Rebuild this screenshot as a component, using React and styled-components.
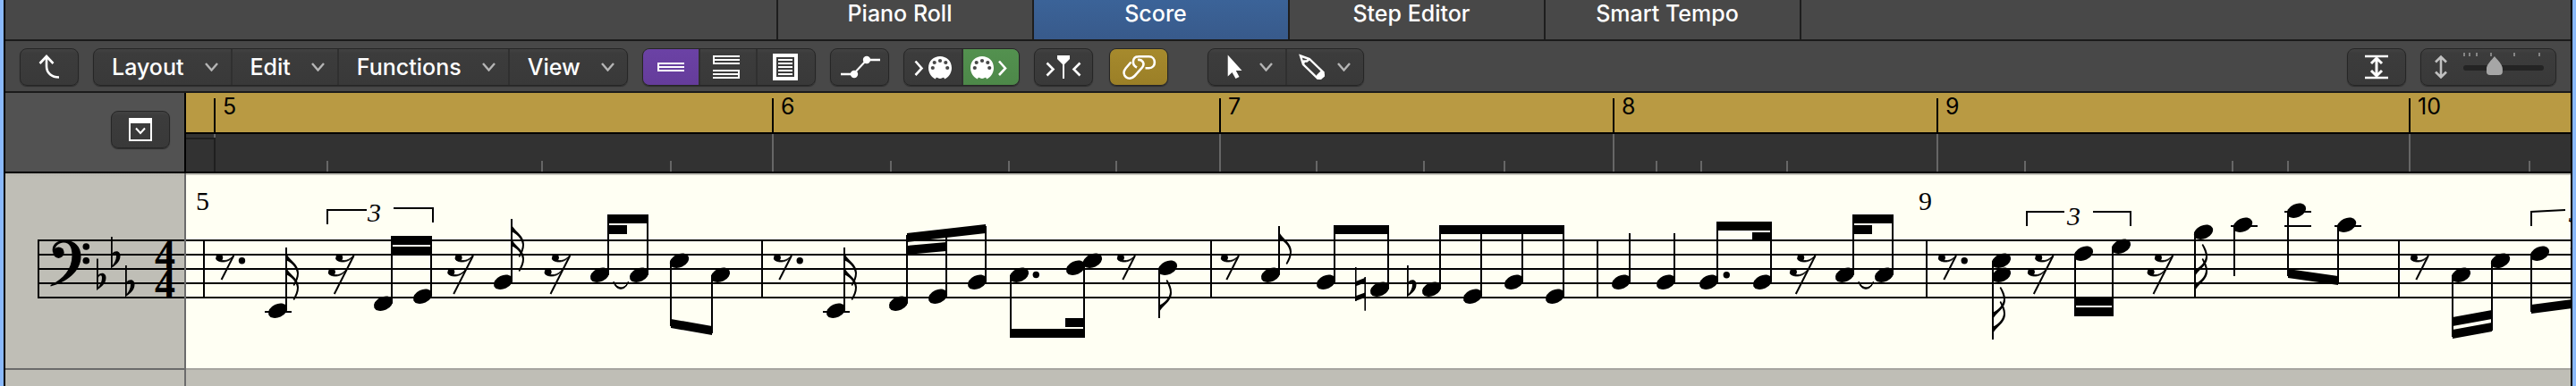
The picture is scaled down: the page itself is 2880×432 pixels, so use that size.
import React from "react";
import styled, { createGlobalStyle, css } from "styled-components";

const GlobalStyle = createGlobalStyle`
  *, *::before, *::after { box-sizing: border-box; }
  body {
    margin: 0;
    background: #bfbeb6;
    font-family: Inter, "Liberation Sans", sans-serif;
    -webkit-font-smoothing: antialiased;
  }
  button { font: inherit; color: inherit; }
`;

/* ---------- window and tab bar ---------- */

const Window = styled.main`
  display: flex;
  flex-direction: column;
  min-height: 100vh;
  border: solid #8ab9fb;
  border-width: 0 4px;
`;

const Frame = styled.div`
  flex: 1;
  display: flex;
  flex-direction: column;
  min-width: 0;
  border: solid #000;
  border-width: 0 2px;
`;

const TabBar = styled.div`
  display: flex;
  justify-content: center;
  height: 46px;
  padding-left: 2px;
  background: #484848;
  border-bottom: 2px solid #1b1b1b;
`;

const Tab = styled.button`
  width: 286px;
  padding: 0 12px 14px 0;
  border: 0;
  border-left: 2px solid #1e1e1e;
  background: ${(p) => (p.$active ? "linear-gradient(#3b6398, #385a8b)" : "transparent")};
  color: #fff;
  font-size: 25px;
  line-height: 30px;
  font-weight: 500;
  text-align: center;
  &:last-child {
    width: 288px;
    border-right: 2px solid #1e1e1e;
  }
`;

/* ---------- toolbar ---------- */

const Toolbar = styled.div`
  display: flex;
  align-items: center;
  gap: 16px;
  height: 58px;
  padding: 2px 16px 0;
  background: #484848;
  border-bottom: 2px solid #1b1b1b;
`;

const Group = styled.div`
  display: flex;
  height: 42px;
  margin-left: ${(p) => p.$lead || 0}px;
  border: 1px solid #262626;
  border-radius: 8px;
  background: linear-gradient(#424242, #3c3c3c 12%, #393939);
  box-shadow: 0 1px 1px #2c2c2c;
  overflow: hidden;
`;

const tones = {
  purple: "linear-gradient(#6b42a5, #653c9b)",
  green: "linear-gradient(#53914f, #4d8849)",
  gold: "linear-gradient(#a68a2d, #9b7f27)",
};

const Segment = styled.button`
  display: flex;
  align-items: center;
  justify-content: center;
  flex: none;
  height: 40px;
  padding: 0;
  border: 0;
  color: #fff;
  background: ${(p) => tones[p.$tone] || "transparent"};
  & + & { border-left: 2px solid #303030; }
`;

const MenuSegment = styled(Segment)`
  gap: 23px;
  padding: 0 14px 0 20px;
  font-size: 25px;
  line-height: 40px;
  font-weight: 500;
`;

const ToolSegment = styled(Segment)`
  gap: 11px;
  padding: 0 14px 0 12px;
`;

const Spacer = styled.div`
  flex: 1;
`;

const Icon = styled.svg`
  display: block;
  flex: none;
  fill: none;
  stroke: currentColor;
  stroke-width: 2.6;
`;

const CaretIcon = styled(Icon)`
  color: #b5b5b5;
`;

const Caret = () => (
  <CaretIcon width="15" height="10" viewBox="0 0 15 10" aria-hidden="true">
    <path d="M1 1 7.500 8.500 14 1" strokeWidth="2.4" />
  </CaretIcon>
);

const glyphs = {
  back: <path d="M30 9V20C30 28 36 32.5 44 32.5M22.5 17 30 9 37.5 17" />,
  linear: (
    <path strokeWidth="2" d="M18 17H48M18 21H48M18 25H48M19 16V26" />
  ),
  wrapped: (
    <path strokeWidth="2" d="M16 9H46M16 13H46M16 17H46M17 8V18M16 25H46M16 29H46M16 33H46M45 24V34" />
  ),
  page: (
    <g>
      <path d="M18 6H46V36H18ZM22 10V32H42V10Z" fill="currentColor" stroke="none" fillRule="evenodd" />
      <path strokeWidth="2" d="M24 13H40M24 17H40M24 21H40M24 25H40M24 29H40" />
    </g>
  ),
  automation: (
    <g>
      <path strokeWidth="2" d="M26 29 41 13" />
      <path d="M12 29H26M41 13H56" />
      <circle cx="27" cy="29" r="4.2" fill="currentColor" stroke="none" />
      <circle cx="41" cy="13" r="4.2" fill="currentColor" stroke="none" />
    </g>
  ),
  catchFilter: (
    <g>
      <path d="M14.500 16.500 21.500 23.500 14.500 30.500M51.500 16.500 44.500 23.500 51.500 30.500" />
      <path d="M26 8H40V12L34 18V34H32V18L26 12Z" fill="currentColor" stroke="none" />
    </g>
  ),
  link: (
    <g>
      <path d="M31 21.500C25 18.500 25.500 9.200 33.500 9.200H44.500C53 9.200 53 22.300 44.500 22.300H40.500" />
      <path d="M24.500 15.500 18.500 22.500C12.500 30 22 38 28.500 31L37 21.500C40.500 17 37 12 32 13" />
    </g>
  ),
  fit: (
    <g>
      <path d="M20 9H46M20 33H46" />
      <path d="M33 12V30M27 17 33 11 39 17M27 25 33 31 39 25" strokeWidth="3" />
    </g>
  ),
};

const Glyph = ({ name, width = 64 }) => (
  <Icon width={width} height="40" viewBox={`${(66 - width) / 2} 1 ${width} 40`} aria-hidden="true">
    {glyphs[name]}
  </Icon>
);

const MidiPlug = ({ cx }) => (
  <g>
    <path
      d={`M${cx} 9C${cx + 7} 9 ${cx + 13} 14 ${cx + 13} 22C${cx + 13} 28 ${cx + 9} 33 ${cx + 5} 34.500
        C${cx + 4} 31 ${cx + 3} 34 ${cx} 34C${cx - 3} 34 ${cx - 4} 31 ${cx - 5} 34.500
        C${cx - 9} 33 ${cx - 13} 28 ${cx - 13} 22C${cx - 13} 14 ${cx - 7} 9 ${cx} 9Z`}
      fill="#fff"
      stroke="none"
    />
    {[[0, -8], [-6.3, -6], [6.3, -6], [-8.2, 0], [8.2, 0]].map(([dx, dy]) => (
      <circle key={`${dx}${dy}`} cx={cx + dx} cy={22 + dy} r="2.1" fill="#474747" stroke="none" />
    ))}
  </g>
);

const ZoomPanel = styled(Group)`
  width: 152px;
  padding-left: 15px;
  gap: 18px;
  color: #c0c0c0;
`;

const SliderStack = styled.label`
  display: flex;
  flex-direction: column;
  padding-top: 4px;
`;

const Slider = styled.input`
  appearance: none;
  width: 90px;
  height: 26px;
  margin: 0;
  background: transparent;
  &::-webkit-slider-runnable-track {
    height: 6px;
    border-radius: 3px;
    background: #242424;
  }
  &::-webkit-slider-thumb {
    appearance: none;
    width: 18px;
    height: 21px;
    margin-top: -10px;
    background: #a6a6a6;
    clip-path: path("M9 0 C12 4 18 9 18 14 V17 Q18 21 14 21 H4 Q0 21 0 17 V14 C0 9 6 4 9 0 Z");
  }
`;

/* ---------- ruler ---------- */

const SIDE = 202;

const RulerRow = styled.div`
  display: flex;
  height: 90px;
  border-bottom: 2px solid #000;
`;

const RulerSide = styled.div`
  flex: none;
  display: flex;
  justify-content: flex-end;
  align-items: flex-start;
  width: ${SIDE}px;
  padding: 20px 16px 0 0;
  background: #525252;
  border-right: 2px solid #000;
`;

const RulerBody = styled.div`
  flex: 1;
  min-width: 0;
  background: #323232;
`;

const BarStrip = styled.div`
  display: flex;
  align-items: flex-end;
  height: 46px;
  padding-left: 31px;
  background: #b99a43;
  border-bottom: 2px solid #000;
  overflow: hidden;
`;

const Bar = styled.div`
  flex: 0 0 ${(p) => p.$width}px;
  height: 38px;
  padding-left: 8px;
  border-left: 2px solid #000;
  color: #000;
  font-size: 25px;
  line-height: 18px;
`;

const Beats = styled.svg`
  display: block;
  width: 100%;
  height: 42px;
`;

/* bar number and its length in the timeline */
const bars = [[5, 624], [6, 500], [7, 440], [8, 362], [9, 528], [10, 400]];
const barTicks = [863, 1363, 1803, 2165, 2693];
const beatTicks = [365, 605, 749, 995, 1127, 1247, 1471, 1591, 1681, 1851, 1901, 1997, 2263, 2495, 2557, 2827];

/* ---------- score ---------- */

const ScoreRow = styled.div`
  display: flex;
  height: 220px;
`;

const paneSide = css`
  flex: none;
  width: ${SIDE}px;
  border-right: 2px solid #6b6b6b;
`;

const StaffHead = styled.div`
  ${paneSide}
  background: linear-gradient(#b5b4ac, #bfbeb6 4px);
  border-bottom: 2px solid #6b6b6b;
`;

const ScorePane = styled.div`
  flex: 1;
  min-width: 0;
  background: #fffff3;
  border-top: 2px solid #c6c5bd;
  border-bottom: 2px solid #a6a59f;
`;

const Below = styled.div`
  flex: 1;
  display: flex;
  min-height: 18px;
  background: #bfbeb6;
`;

const BelowSide = styled.div`
  ${paneSide}
`;

const Music = styled.svg`
  display: block;
  width: 100%;
  height: 216px;
  fill: #000;
  font-family: "Liberation Serif", serif;
  font-size: 30px;
`;

const headY = (s) => 347.7 - 8 * s;

const Head = ({ x, s }) => (
  <ellipse cx={x} cy={headY(s)} rx="11.2" ry="7.500" transform={`rotate(-25 ${x} ${headY(s)})`} />
);

const Line = ({ x1, y1, x2, y2 }) => <path d={`M${x1} ${y1}L${x2} ${y2}`} stroke="#000" strokeWidth="2" />;

const FLAG = "M0 6C2 13 14 18 14 28.500C14 34 12 38 9 43L7.600 42C10 37 12 33 12 29C11.500 22 5 16 0 14.500Z";

/* x: stem, s: staff steps above the lower ledger line, end: far end of the stem */
const Note = ({ x, s, end, down, flags = 0, ledgers = [], extra = [] }) => (
  <g>
    {[s, ...extra].map((v) => <Head key={v} x={down ? x + 9.5 : x - 9.5} s={v} />)}
    <Line x1={x} y1={headY(s)} x2={x} y2={end} />
    {ledgers.map((y) => (
      <Line key={y} x1={down ? x - 4 : x - 24} x2={down ? x + 26 : x + 6} y1={y} y2={y} />
    ))}
    {Array.from({ length: flags }, (_, i) => (
      <path key={i} d={FLAG} transform={`translate(${x} ${down ? end - 16 * i : end + 16 * i}) scale(1 ${down ? -1 : 1})`} />
    ))}
  </g>
);

/* a beam whose upper edge runs from (x1,y1) to (x2,y2) */
const Beam = ({ x1, y1, x2, y2 = y1, t = 10 }) => (
  <path d={`M${x1} ${y1}L${x2} ${y2}V${y2 + t}L${x1} ${y1 + t}Z`} />
);

const Swoosh = ({ x, y, tip = 16 }) => (
  <g>
    <circle cx={x} cy={y} r="3.9" />
    <path d={`M${x - 3.8} ${y + 1}C${x - 2} ${y + 6} ${x + 11} ${y + 7} ${x + tip} ${y - 2.5}C${x + 10} ${y + 4} ${x + 6} ${y + 3.5} ${x + 1} ${y + 3}Z`} stroke="#000" strokeWidth=".8" />
  </g>
);

const Rest8 = ({ x, dot }) => (
  <g>
    <Swoosh x={x} y={288.3} />
    <Line x1={x + 16} y1={286} x2={x + 2.3} y2={313} />
    {dot && <circle cx={x + 25.2} cy="291.7" r="3.7" />}
  </g>
);

const Rest16 = ({ x }) => (
  <g>
    <Swoosh x={x} y={288.3} />
    <Swoosh x={x - 8.3} y={304.3} />
    <Line x1={x + 16.3} y1={286} x2={x - 5.5} y2={329} />
  </g>
);

const Flat = ({ x, y }) => (
  <path
    fillRule="evenodd"
    d={`M${x} ${y - 35.5}H${x + 1.8}V${y - 17}C${x + 4} ${y - 20} ${x + 10.5} ${y - 20.5} ${x + 10.5} ${y - 14}
      C${x + 10.5} ${y - 7} ${x + 4} ${y - 3} ${x} ${y}ZM${x + 1.8} ${y - 14}V${y - 3.5}
      C${x + 4} ${y - 6} ${x + 6} ${y - 10} ${x + 6} ${y - 14}C${x + 6} ${y - 18} ${x + 3} ${y - 17} ${x + 1.8} ${y - 14}Z`}
  />
);

const Natural = ({ x }) => (
  <g>
    <path d={`M${x} 299H${x + 1.6}V337H${x}ZM${x + 10.4} 310H${x + 12}V347.700H${x + 10.4}Z`} />
    <path d={`M${x} 315.300 ${x + 12} 310.500V316L${x} 320.500ZM${x} 331.500 ${x + 12} 327V332.500L${x} 337Z`} />
  </g>
);

const Tie = ({ x }) => (
  <path d={`M${x} 315C${x + 2} 326 ${x + 14} 326 ${x + 16.5} 315C${x + 13} 324 ${x + 4} 324 ${x} 315Z`} stroke="#000" strokeWidth="1" />
);

const Triplet = ({ x, y, end, endY = y, left, num, numY, right }) => (
  <g>
    <path d={`M${x} ${y + 16}V${y}H${left}`} fill="none" stroke="#000" strokeWidth="2" />
    <text x={num} y={numY} fontStyle="italic">3</text>
    <path d={`M${right} ${endY}H${end}V${endY + 16}`} fill="none" stroke="#000" strokeWidth="2" />
  </g>
);

const STAFF = [269, 285, 301, 317, 333];
const barLines = [228, 852, 1354, 1786, 2154, 2682];

const StaffHeadMusic = () => (
  <Music role="img" aria-label="Bass clef, three flats, four four time">
    <g transform="translate(-6 -194)">
      {STAFF.map((y) => <Line key={y} x1={42} x2={206} y1={y} y2={y} />)}
      <Line x1={43} x2={43} y1={268} y2={334} />
      <circle cx="65.500" cy="282.700" r="6.200" />
      <path d="M59 283C57 273 64 269 72.500 269C84 269 90.500 276 90.500 287C90.500 304 74 316 56.500 320.500V319C71 312 80.500 301 80.500 286C80.500 277 78 271.500 71 271.500C66 271.500 62 275 60.500 281Z" />
      <circle cx="96.300" cy="276" r="3.800" />
      <circle cx="96.300" cy="291.700" r="3.800" />
      <Flat x={108} y={325} />
      <Flat x={124} y={300.5} />
      <Flat x={140} y={332.5} />
      <text x="173" y="301" fontSize="46" fontWeight="700">4</text>
      <text x="173" y="333" fontSize="46" fontWeight="700">4</text>
    </g>
  </Music>
);

const ScoreMusic = () => (
  <Music role="img" aria-label="Score, bars 5 to 10">
    <g transform="translate(-208 -196)">
      <path d={STAFF.map((y) => `M208 ${y}H6000`).join("")} stroke="#000" strokeWidth="2" />
      {barLines.map((x) => <Line key={x} x1={x} x2={x} y1={269} y2={333} />)}
      <text x="219" y="235">5</text>
      <text x="2145" y="235">9</text>

      {/* bar 5 */}
      <Rest8 x={245.3} dot />
      <Note x={320} s={0} end={277} flags={2} ledgers={[349]} />
      <Rest16 x={379.3} />
      <Note x={438} s={1} end={265} />
      <Note x={482} s={2} end={265} />
      <Beam x1={437} x2={483} y1={264} />
      <Beam x1={437} x2={483} y1={276} />
      <Triplet x={366} y={235} left={410} num={411} numY={248} right={440} end={484} endY={233} />
      <Rest16 x={512.7} />
      <Note x={572} s={4} end={245} flags={2} />
      <Rest16 x={621} />
      <Note x={680} s={5} end={241} />
      <Note x={724} s={5} end={241} />
      <Beam x1={679} x2={725} y1={240} />
      <Beam x1={679} x2={701} y1={252} />
      <Tie x={686} />
      <Note x={750} s={7} end={365} down />
      <Note x={796} s={5} end={373} down />
      <Beam x1={750} y1={357} x2={796} y2={365} />

      {/* bar 6 */}
      <Rest8 x={869} dot />
      <Note x={944} s={0} end={277} flags={2} ledgers={[349]} />
      <Note x={1014} s={1} end={263} />
      <Note x={1058} s={2} end={258} />
      <Note x={1102} s={4} end={253} />
      <Beam x1={1014} y1={261} x2={1102} y2={251} />
      <Beam x1={1014} y1={275} x2={1058} y2={271} />
      <Note x={1130} s={5} end={377} down />
      <circle cx="1158.300" cy="307.500" r="3.700" />
      <Head x={1202.5} s={6} />
      <Note x={1212} s={7} end={377} down />
      <Beam x1={1129} x2={1213} y1={368} />
      <Beam x1={1191} x2={1213} y1={356} />
      <Rest8 x={1253} />
      <Note x={1296} s={6} end={356} down flags={1} />

      {/* bar 7 */}
      <Rest8 x={1369} />
      <Note x={1430} s={5} end={253} flags={1} />
      <Note x={1492} s={4} end={253} />
      <Natural x={1515} />
      <Note x={1552} s={3} end={253} />
      <Beam x1={1491} x2={1553} y1={252} />
      <Flat x={1573} y={332.5} />
      <Note x={1610} s={3} end={253} />
      <Note x={1656} s={2} end={253} />
      <Note x={1702} s={4} end={253} />
      <Note x={1748} s={2} end={253} />
      <Beam x1={1609} x2={1749} y1={252} />

      {/* bar 8 */}
      <Note x={1822} s={4} end={261} />
      <Note x={1872} s={4} end={261} />
      <Note x={1920} s={4} end={249} />
      <circle cx="1930.300" cy="307.700" r="3.700" />
      <Note x={1980} s={4} end={249} />
      <Beam x1={1919} x2={1981} y1={248} />
      <Beam x1={1959} x2={1981} y1={260} />
      <Rest16 x={2013.3} />
      <Note x={2072} s={5} end={241} />
      <Note x={2116} s={5} end={241} />
      <Beam x1={2071} x2={2117} y1={240} />
      <Beam x1={2071} x2={2093} y1={252} />
      <Tie x={2078} />

      {/* bar 9 */}
      <Rest8 x={2171} dot />
      <Note x={2228} s={7} extra={[5]} end={380} down flags={2} />
      <Rest16 x={2279.3} />
      <Triplet x={2266} y={237} left={2308} num={2311} numY={252} right={2340} end={2382} />
      <Note x={2320} s={8} end={353} down />
      <Note x={2362} s={9} end={353} down />
      <Beam x1={2319} x2={2363} y1={332} />
      <Beam x1={2319} x2={2363} y1={344} />
      <Rest16 x={2413} />
      <Note x={2454} s={11} end={332} down flags={2} />
      <Note x={2498} s={12} end={309} down ledgers={[253]} />
      <Note x={2558} s={14} end={309} down ledgers={[237, 253]} />
      <Note x={2614} s={12} end={317} down ledgers={[253]} />
      <Beam x1={2558} y1={301} x2={2614} y2={309} />

      {/* bar 10 */}
      <Rest8 x={2699} />
      <Note x={2742} s={5} end={377} down />
      <Note x={2786} s={7} end={370} down />
      <Beam x1={2742} y1={355} x2={2786} y2={347} />
      <Beam x1={2742} y1={369} x2={2786} y2={361} />
      <Note x={2830} s={8} end={349} down />
      <Note x={2875} s={9} end={344} down />
      <Beam x1={2830} y1={341} x2={2876} y2={335} />
      <path d="M2830 253V237L2868 235" fill="none" stroke="#000" strokeWidth="2" />
      <text x="2872" y="249" fontStyle="italic">3</text>
    </g>
  </Music>
);

export default function App() {
  return (
    <Window>
      <GlobalStyle />
      <Frame>
        <TabBar role="tablist">
          {["Piano Roll", "Score", "Step Editor", "Smart Tempo"].map((t) => (
            <Tab key={t} role="tab" aria-selected={t === "Score"} $active={t === "Score"}>{t}</Tab>
          ))}
        </TabBar>

        <Toolbar>
          <Group><Segment aria-label="Back"><Glyph name="back" /></Segment></Group>
          <Group>
            {["Layout", "Edit", "Functions", "View"].map((m) => (
              <MenuSegment key={m} aria-haspopup="menu">{m}<Caret /></MenuSegment>
            ))}
          </Group>
          <Group>
            <Segment $tone="purple" aria-label="Linear view"><Glyph name="linear" width={62} /></Segment>
            <Segment aria-label="Wrapped view"><Glyph name="wrapped" width={62} /></Segment>
            <Segment aria-label="Page view"><Glyph name="page" width={64} /></Segment>
          </Group>
          <Group><Segment aria-label="Automation"><Glyph name="automation" /></Segment></Group>
          <Group>
            <Segment aria-label="MIDI in">
              <Icon width="64" height="40" viewBox="1 1 64 40" aria-hidden="true">
                <path d="M13.500 14.500 20.500 22.500 13.500 30" />
                <MidiPlug cx={41} />
              </Icon>
            </Segment>
            <Segment $tone="green" aria-label="MIDI out">
              <Icon width="62" height="40" viewBox="1 1 62 40" aria-hidden="true">
                <MidiPlug cx={22} />
                <path d="M41 14.500 48 22.500 41 30" />
              </Icon>
            </Segment>
          </Group>
          <Group><Segment aria-label="Catch"><Glyph name="catchFilter" /></Segment></Group>
          <Group $lead={2}><Segment $tone="gold" aria-label="Link"><Glyph name="link" /></Segment></Group>
          <Group $lead={28}>
            <ToolSegment aria-label="Pointer tool">
              <Icon width="34" height="40" viewBox="13 1 34 40" aria-hidden="true">
                <path d="M22.700 7.500V31.500L27.500 27 31.500 34 35.500 32 31.800 25H38.500Z" fill="#fff" stroke="none" />
              </Icon>
              <Caret />
            </ToolSegment>
            <ToolSegment aria-label="Pencil tool">
              <Icon width="33" height="40" viewBox="13 1 33 40" aria-hidden="true">
                <path strokeWidth="2.400" d="M16 8.500 26 12 41.500 27 35 33.500 19 18ZM19 18 20 14.500 23 14.500 26 12" />
                <path d="M34 30 39 25 43 28.500V31.500L39 35H36L34 33Z" fill="#fff" stroke="none" />
              </Icon>
              <Caret />
            </ToolSegment>
          </Group>
          <Spacer />
          <Group><Segment aria-label="Fit height"><Glyph name="fit" /></Segment></Group>
          <ZoomPanel>
            <Icon width="14" height="40" viewBox="26 1 14 40" aria-hidden="true">
              <path d="M33 10V32M27 15.500 33 9.500 39 15.500M27 26.500 33 32.500 39 26.500" />
            </Icon>
            <SliderStack>
              <svg width="90" height="4" aria-hidden="true">
                <path d="M1 0V4M7 0V4M15 0V4M31 0V4M57 0V4M85 0V4" stroke="#858585" strokeWidth="2" />
              </svg>
              <Slider type="range" min="0" max="100" defaultValue="36" aria-label="Vertical zoom" />
            </SliderStack>
          </ZoomPanel>
        </Toolbar>

        <RulerRow>
          <RulerSide>
            <Group>
              <Segment aria-label="Staff options">
                <Icon width="64" height="40" viewBox="1 1 64 40" aria-hidden="true">
                  <path d="M21 12H45V33H21Z" strokeWidth="2" />
                  <path d="M20 8H46V14H20Z" fill="#fff" stroke="none" />
                  <path d="M28 19.500 33 25 38 19.500" strokeWidth="2" />
                </Icon>
              </Segment>
            </Group>
          </RulerSide>
          <RulerBody>
            <BarStrip>
              {bars.map(([n, w]) => <Bar key={n} $width={w}>{n}</Bar>)}
            </BarStrip>
            <Beats aria-hidden="true">
              <g transform="translate(-208 0)">
                <path d="M208 5H240V42" fill="none" stroke="#1f1f1f" strokeWidth="2" />
                <path d="M240 0V4" stroke="#666" strokeWidth="2" />
                <path
                  d={barTicks.map((x) => `M${x + 1} 0V42`).join("") + beatTicks.map((x) => `M${x + 1} 30V42`).join("")}
                  stroke="#666"
                  strokeWidth="2"
                />
              </g>
            </Beats>
          </RulerBody>
        </RulerRow>

        <ScoreRow>
          <StaffHead><StaffHeadMusic /></StaffHead>
          <ScorePane><ScoreMusic /></ScorePane>
        </ScoreRow>
        <Below><BelowSide /></Below>
      </Frame>
    </Window>
  );
}
